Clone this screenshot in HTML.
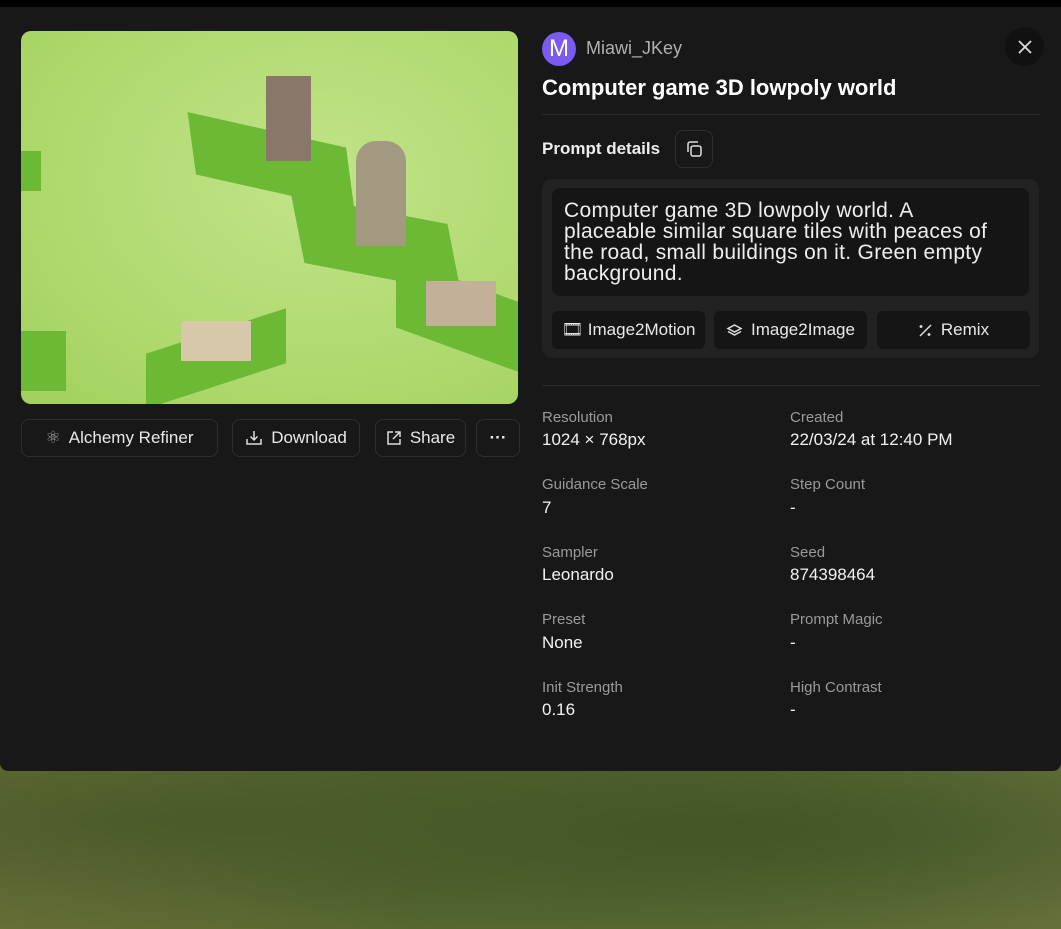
<!DOCTYPE html>
<html style="overflow:hidden;height:929px"><head><style>
*{box-sizing:border-box;margin:0;padding:0}
body{width:1061px;height:929px;overflow:hidden;background:#000;font-family:"Liberation Sans",sans-serif;color:#fff;position:relative}
.clip{position:absolute;left:0;top:740px;width:1061px;height:189px;overflow:hidden}
.bg{position:absolute;left:-30px;top:-20px;width:1121px;height:240px;background:radial-gradient(ellipse at 230px 100px,#4a5a2a,transparent 60%),radial-gradient(ellipse at 730px 110px,#3d5226,transparent 60%),linear-gradient(90deg,#6a7038,#56682f 40%,#5a6b32 70%,#66703a);filter:blur(8px)}
.panel{position:absolute;left:0;top:7px;width:1061px;height:764px;background:#181818;border-radius:0 0 8px 8px}
.img{position:absolute;left:21px;top:31px;width:497px;height:373px;border-radius:10px;overflow:hidden;background:radial-gradient(ellipse at 60% 40%,#c2e38a,#acd86a 70%,#a0d05c)}
.t{position:absolute;background:#6bb934;transform:skewY(-20deg)}
.btn{position:absolute;top:419px;height:38px;border:1px solid #2e2e2e;border-radius:8px;font-size:17px;color:#e8e8e8;display:flex;align-items:center;justify-content:center;gap:8px}
.a{position:absolute;font-size:15px;color:#9a9a9a}
.v{position:absolute;font-size:17px;color:#f2f2f2}
.sb{position:absolute;top:311px;height:38px;background:#151515;border-radius:6px;font-size:17px;color:#e8e8e8;display:flex;align-items:center;justify-content:center;gap:8px}
</style></head><body>
<div class="clip"><div class="bg"></div></div>
<div class="panel"></div>
<div class="img">
<div class="t" style="left:170px;top:100px;width:160px;height:60px;transform:skewY(20deg) rotate(-8deg)"></div>
<div style="position:absolute;left:245px;top:45px;width:45px;height:85px;background:#8a776c"></div>
<div class="t" style="left:275px;top:180px;width:160px;height:65px;transform:skewY(22deg) rotate(-12deg)"></div>
<div style="position:absolute;left:335px;top:110px;width:50px;height:105px;background:#a49a82;border-radius:20px 20px 0 0"></div>
<div class="t" style="left:125px;top:300px;width:140px;height:55px;transform:skewY(-18deg)"></div>
<div style="position:absolute;left:160px;top:290px;width:70px;height:40px;background:#d6c8a8"></div>
<div class="t" style="left:375px;top:250px;width:130px;height:70px;transform:skewY(20deg)"></div>
<div style="position:absolute;left:405px;top:250px;width:70px;height:45px;background:#c3b098"></div>
<div class="t" style="left:-10px;top:300px;width:55px;height:60px;transform:none"></div>
<div class="t" style="left:-10px;top:120px;width:30px;height:40px;transform:none"></div>
</div>
<div class="btn" style="left:21px;width:197px"><span style="color:#aaa">⚛</span>Alchemy Refiner</div>
<div class="btn" style="left:232px;width:128px"><svg width="18" height="18" viewBox="0 0 18 18" fill="none" stroke="#ddd" stroke-width="1.5"><path d="M9 2v9M5.5 7.5L9 11l3.5-3.5M2 10v5h14v-5"/></svg>Download</div>
<div class="btn" style="left:375px;width:91px"><svg width="16" height="16" viewBox="0 0 16 16" fill="none" stroke="#ddd" stroke-width="1.5"><path d="M7 2H2v12h12V9M9 2h5v5M14 2L7 9"/></svg>Share</div>
<div class="btn" style="left:476px;width:44px;font-weight:bold">···</div>

<div style="position:absolute;left:542px;top:32px;width:34px;height:34px;border-radius:50%;background:#7a5af0;font-size:24px;display:flex;align-items:center;justify-content:center">M</div>
<div style="position:absolute;left:586px;top:38px;font-size:18px;color:#b0b0b0">Miawi_JKey</div>
<div style="position:absolute;left:1005px;top:27px;width:39px;height:39px;border-radius:50%;background:#111;display:flex;align-items:center;justify-content:center"><svg width="16" height="16" viewBox="0 0 16 16" stroke="#ddd" stroke-width="1.8"><path d="M2 2l12 12M14 2L2 14"/></svg></div>
<div style="position:absolute;left:542px;top:75px;font-size:22px;font-weight:bold">Computer game 3D lowpoly world</div>
<div style="position:absolute;left:542px;top:114px;width:498px;height:1px;background:#2a2a2a"></div>
<div style="position:absolute;left:542px;top:139px;font-size:17px;font-weight:bold;color:#eee">Prompt details</div>
<div style="position:absolute;left:675px;top:130px;width:38px;height:38px;border:1px solid #2e2e2e;border-radius:8px;display:flex;align-items:center;justify-content:center"><svg width="18" height="18" viewBox="0 0 18 18" fill="none" stroke="#ddd" stroke-width="1.5"><rect x="6" y="6" width="10" height="10" rx="2"/><path d="M3 12V4a2 2 0 012-2h8"/></svg></div>
<div style="position:absolute;left:542px;top:179px;width:497px;height:179px;background:#222;border-radius:10px"></div>
<div style="position:absolute;left:552px;top:188px;width:477px;height:108px;background:#151515;border-radius:8px;padding:12px 12px;font-size:21px;line-height:21px;color:#eee"><div style="width:440px;letter-spacing:0.3px">Computer game 3D lowpoly world. A<br>placeable similar square tiles with peaces of<br>the road, small buildings on it. Green empty<br>background.</div></div>
<div class="sb" style="left:552px;top:311px;width:153px">🎞 Image2Motion</div>
<div class="sb" style="left:714px;top:311px;width:153px"><svg width="17" height="14" viewBox="0 0 17 14" fill="none" stroke="#ddd" stroke-width="1.5"><path d="M8.5 2L15 5.5 8.5 9 2 5.5z M2 8.5L8.5 12 15 8.5"/></svg>Image2Image</div>
<div class="sb" style="left:877px;top:311px;width:153px"><svg width="15" height="15" viewBox="0 0 15 15" fill="none" stroke="#ddd" stroke-width="1.5"><path d="M2 13L13 2M3 2v3M1.5 3.5h3M11 10v3M9.5 11.5h3"/></svg>Remix</div>
<div style="position:absolute;left:542px;top:385px;width:498px;height:1px;background:#2a2a2a"></div>

<div class="a" style="left:542px;top:409px">Resolution</div><div class="v" style="left:542px;top:430px">1024 × 768px</div>
<div class="a" style="left:790px;top:409px">Created</div><div class="v" style="left:790px;top:430px">22/03/24 at 12:40 PM</div>
<div class="a" style="left:542px;top:476px">Guidance Scale</div><div class="v" style="left:542px;top:498px">7</div>
<div class="a" style="left:790px;top:476px">Step Count</div><div class="v" style="left:790px;top:498px">-</div>
<div class="a" style="left:542px;top:544px">Sampler</div><div class="v" style="left:542px;top:565px">Leonardo</div>
<div class="a" style="left:790px;top:544px">Seed</div><div class="v" style="left:790px;top:565px">874398464</div>
<div class="a" style="left:542px;top:611px">Preset</div><div class="v" style="left:542px;top:633px">None</div>
<div class="a" style="left:790px;top:611px">Prompt Magic</div><div class="v" style="left:790px;top:633px">-</div>
<div class="a" style="left:542px;top:679px">Init Strength</div><div class="v" style="left:542px;top:700px">0.16</div>
<div class="a" style="left:790px;top:679px">High Contrast</div><div class="v" style="left:790px;top:700px">-</div>
</body></html>
